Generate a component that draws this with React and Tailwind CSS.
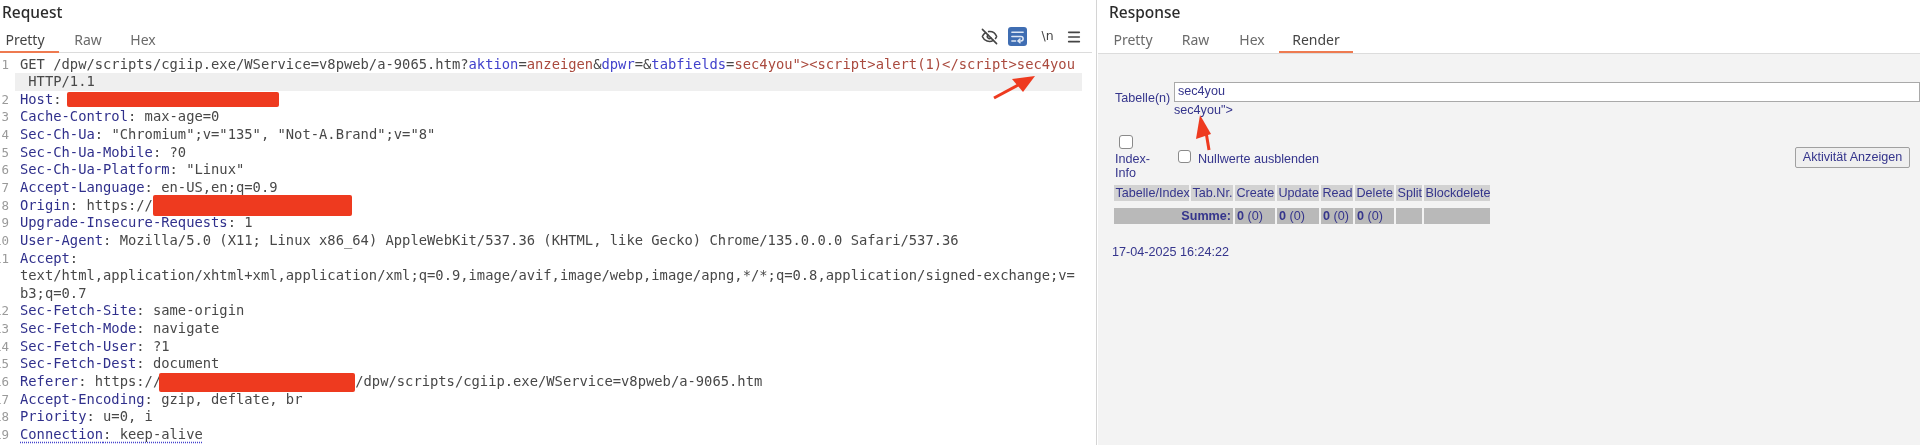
import { EyeOff, WrapText, Menu } from 'lucide-react'

const Key = ({ children }) => <span className="text-[#30308c]">{children}</span>
const Param = ({ children }) => <span className="text-[#4242cc]">{children}</span>
const Val = ({ children }) => <span className="text-[#aa4a3e]">{children}</span>
const Redact = ({ className }) => (
  <span className={`inline-block -my-2 align-middle rounded-[2px] bg-[#ee3a1f] ${className}`}></span>
)

function Line({ num, active, children }) {
  return (
    <div className="flex h-[17.65px] leading-[17.65px]">
      <div className="flex w-[15px] shrink-0 justify-end overflow-hidden pr-[6px] text-[12.5px] text-[#9a9a9a]">{num}</div>
      <div className={`w-[1067px] whitespace-pre pl-[5px] ${active ? 'bg-[#efefef]' : ''}`}>{children}</div>
    </div>
  )
}

function Tabs({ items, active }) {
  return (
    <div className="flex h-[23px] items-start font-['Noto_Sans',sans-serif] text-[14px] text-[#6b6b6b]">
      {items.map((t) => (
        <div
          key={t.label}
          className={`flex h-[23px] justify-center leading-[20px] ${t.className} ${active === t.label ? 'border-b-[2px] border-[#ee7a50] text-[#444444]' : ''}`}
        >
          {t.label}
        </div>
      ))}
    </div>
  )
}

function Checkbox({ className }) {
  return <div className={`rounded-[3px] border border-[#8a8a8a] bg-white ${className}`}></div>
}

function RequestPanel() {
  return (
    <div className="relative w-[1096px] shrink-0 bg-white">
      <div className="h-[30px] pl-[2px] pt-[2px] font-['Noto_Sans',sans-serif] text-[15.5px] font-medium leading-[20px] text-[#2b2b2b]">
        Request
      </div>
      <div className="flex h-[23px] w-[1092px] items-start justify-between border-b border-[#dcdcdc]">
        <Tabs
          items={[
            { label: 'Pretty', className: 'w-[59px] pr-[9px]' },
            { label: 'Raw', className: 'w-[58px]' },
            { label: 'Hex', className: 'w-[52px]' },
          ]}
          active="Pretty"
        />
        <div className="-mt-[3px] flex items-center text-[#444444]">
          <EyeOff size={17} strokeWidth={2.2} />
          <div className="ml-[10px] flex h-[19px] w-[19px] items-center justify-center rounded-[3px] bg-[#3f6db2] text-[#dfe8f5]">
            <WrapText size={15} strokeWidth={2.4} />
          </div>
          <div className="ml-[12px] w-[17px] text-center font-['DejaVu_Sans',sans-serif] text-[12.5px] font-medium">\n</div>
          <Menu className="ml-[10px] mr-[10px]" size={16} strokeWidth={2.4} />
        </div>
      </div>
      <div className="pt-[2.5px] font-['DejaVu_Sans_Mono',monospace] text-[13.8px] text-[#484848]">
        <Line num="1">
          GET /dpw/scripts/cgiip.exe/WService=v8pweb/a-9065.htm?<Param>aktion</Param>=<Val>anzeigen</Val>&amp;<Param>dpwr</Param>=&amp;<Param>tabfields</Param>=<Val>{'sec4you"><script>alert(1)</script>sec4you'}</Val>
        </Line>
        <Line active>{' HTTP/1.1'}</Line>
        <Line num="2"><Key>Host</Key>: <Redact className="-ml-[3px] h-[15px] w-[212px]" /></Line>
        <Line num="3"><Key>Cache-Control</Key>: max-age=0</Line>
        <Line num="4"><Key>Sec-Ch-Ua</Key>: "Chromium";v="135", "Not-A.Brand";v="8"</Line>
        <Line num="5"><Key>Sec-Ch-Ua-Mobile</Key>: ?0</Line>
        <Line num="6"><Key>Sec-Ch-Ua-Platform</Key>: "Linux"</Line>
        <Line num="7"><Key>Accept-Language</Key>: en-US,en;q=0.9</Line>
        <Line num="8"><Key>Origin</Key>: https://<Redact className="h-[21px] w-[199px]" /></Line>
        <Line num="9"><Key>Upgrade-Insecure-Requests</Key>: 1</Line>
        <Line num="10"><Key>User-Agent</Key>: Mozilla/5.0 (X11; Linux x86_64) AppleWebKit/537.36 (KHTML, like Gecko) Chrome/135.0.0.0 Safari/537.36</Line>
        <Line num="11"><Key>Accept</Key>:</Line>
        <Line>text/html,application/xhtml+xml,application/xml;q=0.9,image/avif,image/webp,image/apng,*/*;q=0.8,application/signed-exchange;v=</Line>
        <Line>b3;q=0.7</Line>
        <Line num="12"><Key>Sec-Fetch-Site</Key>: same-origin</Line>
        <Line num="13"><Key>Sec-Fetch-Mode</Key>: navigate</Line>
        <Line num="14"><Key>Sec-Fetch-User</Key>: ?1</Line>
        <Line num="15"><Key>Sec-Fetch-Dest</Key>: document</Line>
        <Line num="16"><Key>Referer</Key>: https://<Redact className="-ml-[2px] h-[19px] w-[196px]" />/dpw/scripts/cgiip.exe/WService=v8pweb/a-9065.htm</Line>
        <Line num="17"><Key>Accept-Encoding</Key>: gzip, deflate, br</Line>
        <Line num="18"><Key>Priority</Key>: u=0, i</Line>
        <Line num="19">
          <span className="underline decoration-dotted decoration-[#4242cc] underline-offset-[3px]"><Key>Connection</Key>: keep-alive</span>
        </Line>
      </div>
      {/* arrow annotation */}
      <svg className="absolute left-[990px] top-[72px]" width="50" height="30" viewBox="0 0 50 30">
        <path d="M4 26 L30 12" stroke="#ee3a1f" strokeWidth="3" fill="none" />
        <path d="M45 4 L22 7 L33 20 Z" fill="#ee3a1f" />
      </svg>
    </div>
  )
}

function ResponsePanel() {
  const cols = ['Tabelle/Index', 'Tab.Nr.', 'Create', 'Update', 'Read', 'Delete', 'Split', 'Blockdelete']
  return (
    <div className="relative flex min-w-0 flex-1 flex-col border-l border-[#d4d4d4]">
      <div className="h-[30px] pl-[12px] pt-[2px] font-['Noto_Sans',sans-serif] text-[15.5px] font-medium leading-[20px] text-[#2b2b2b]">
        Response
      </div>
      <div className="ml-[1px] border-b border-[#dcdcdc]">
        <Tabs
          items={[
            { label: 'Pretty', className: 'w-[70px]' },
            { label: 'Raw', className: 'w-[55px]' },
            { label: 'Hex', className: 'w-[56px] pl-[2px]' },
            { label: 'Render', className: 'w-[74px]' },
          ]}
          active="Render"
        />
      </div>
      <div className="ml-[1px] flex-1 bg-[#f3f3f3] pl-[17px] pt-[28px] font-['Liberation_Sans',sans-serif] text-[12.6px] text-[#35358c]">
        <div className="flex">
          <div className="w-[59px] pt-[9px] leading-[14px]">Tabelle(n)</div>
          <div className="flex-1">
            <div className="h-[20px] border border-[#a9a9a9] bg-white pl-[3px] leading-[16px]">sec4you</div>
            <div className="mt-[1px] leading-[14px]">sec4you"&gt;</div>
          </div>
        </div>
        <div className="mt-[18px] flex items-start">
          <div className="w-[63px] leading-[14px]">
            <Checkbox className="mb-[3px] ml-[4px] h-[14px] w-[14px]" />
            <div>Index-</div>
            <div>Info</div>
          </div>
          <Checkbox className="mt-[15px] h-[13px] w-[13px]" />
          <div className="ml-[7px] mt-[17px] leading-[14px]">Nullwerte ausblenden</div>
          <div className="ml-auto mr-[10px] mt-[12px] flex h-[21px] w-[115px] items-center justify-center whitespace-nowrap rounded-[2px] border border-[#a0a0a0] bg-[#efefef]">
            Aktivität Anzeigen
          </div>
        </div>
        <div className="-ml-[1px] mt-[5px] grid grid-cols-[75px_42px_40px_42px_32px_39px_26px_66px] gap-x-[2px] leading-[16px]">
          {cols.map((c) => (
            <div key={c} className="h-[16px] whitespace-nowrap bg-[#d2d2d2] px-[1.5px]">{c}</div>
          ))}
          <div className="col-span-2 mt-[7px] h-[16px] bg-[#b9b9b9] pr-[2px] text-right font-bold">Summe:</div>
          {[0, 1, 2, 3].map((i) => (
            <div key={i} className="mt-[7px] h-[16px] whitespace-nowrap bg-[#b9b9b9] px-[2px]">
              <b>0</b> (0)
            </div>
          ))}
          <div className="mt-[7px] h-[16px] bg-[#b9b9b9]"></div>
          <div className="mt-[7px] h-[16px] bg-[#b9b9b9]"></div>
        </div>
        <div className="-ml-[3px] mt-[21px] leading-[14px]">17-04-2025 16:24:22</div>
      </div>
      {/* arrow annotation */}
      <svg className="absolute left-[96px] top-[112px]" width="24" height="42" viewBox="0 0 24 42">
        <path d="M13 20 L16 38" stroke="#ee3a1f" strokeWidth="3" fill="none" />
        <path d="M7 3 L3 27 L18 22 Z" fill="#ee3a1f" />
      </svg>
    </div>
  )
}

export default function App() {
  return (
    <div className="flex h-[445px] w-[1920px] overflow-hidden bg-white blur-[0.5px]">
      <RequestPanel />
      <ResponsePanel />
    </div>
  )
}
